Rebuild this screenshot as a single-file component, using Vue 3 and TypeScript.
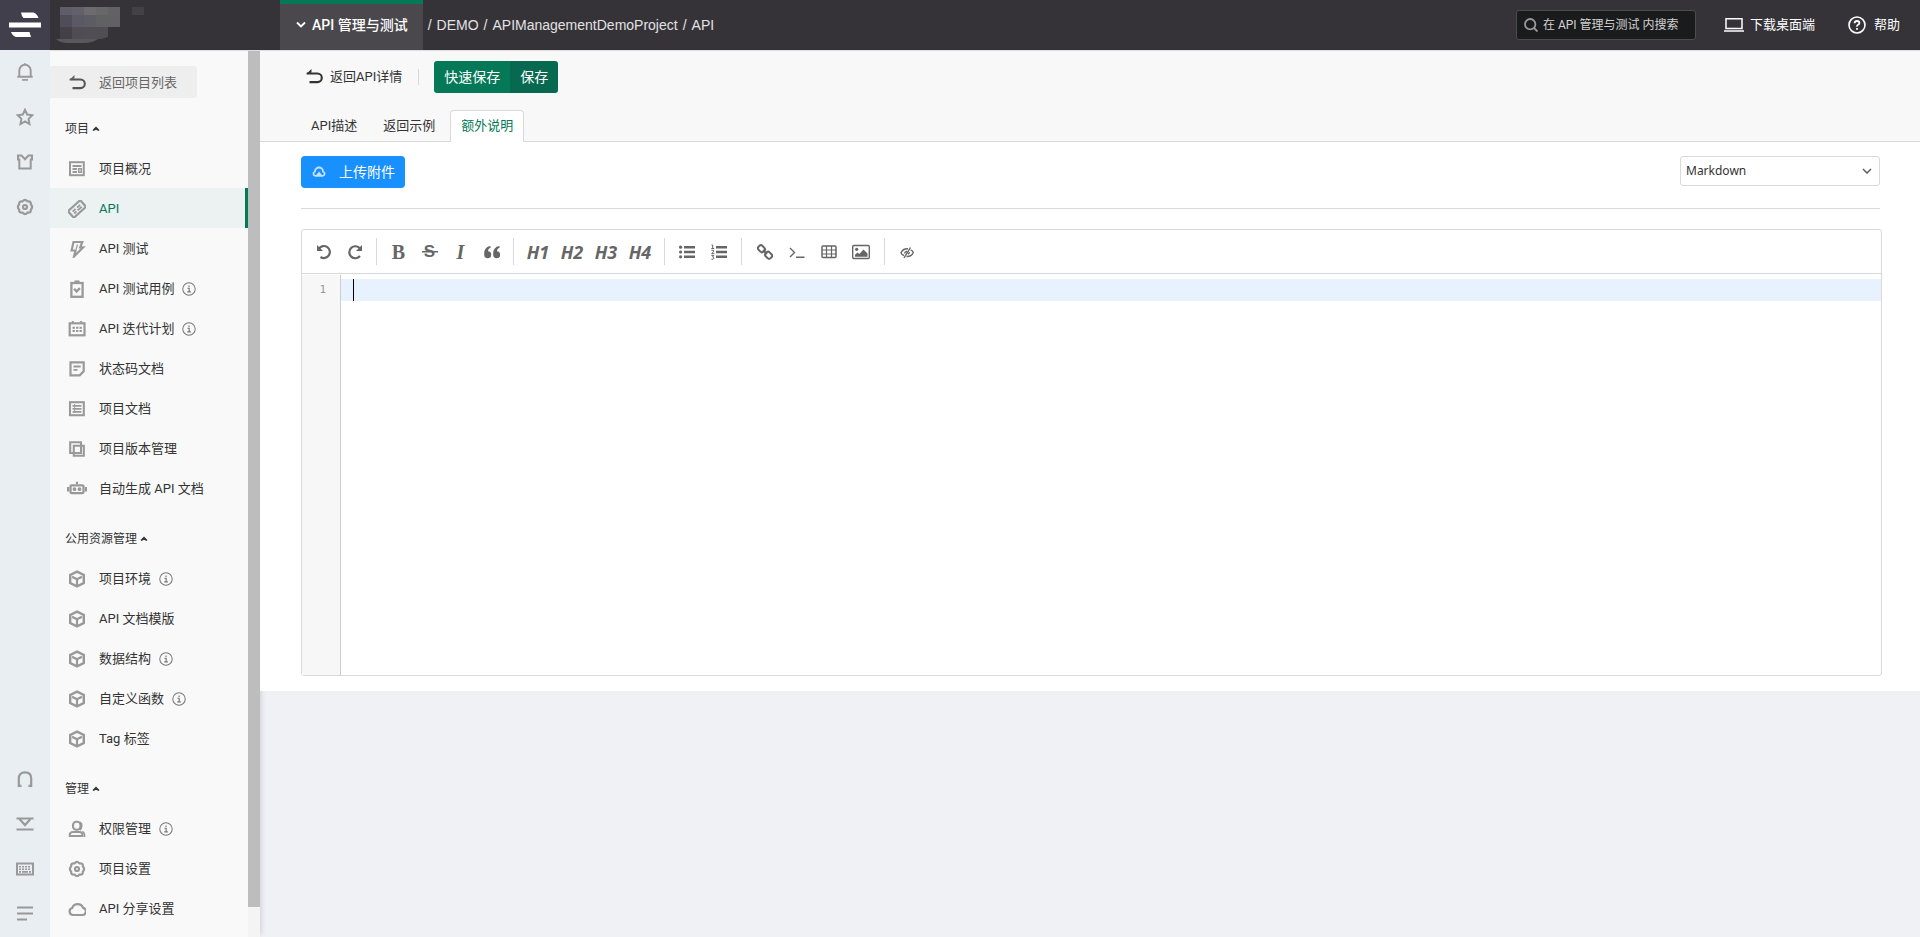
<script setup lang="ts">
import { ref } from 'vue'

interface MenuItem {
  label: string
  icon: string
  info?: boolean
  active?: boolean
}
interface MenuSection {
  title: string
  items: MenuItem[]
}

const cube =
  '<path d="M9 1.600 15.800 5v8L9 16.400 2.200 13V5z" stroke-width="2.400"/><path d="M4 6.700 9 9.300l5-2.600M9 9.300v5.700" stroke-width="2.200"/>'
const gear =
  '<path d="M6.600 3.400Q9 .4 11.400 3.400Q15.200 2.900 14.800 6.200Q17.400 9 14.800 11.800Q15.200 15.100 11.400 14.600Q9 17.600 6.600 14.600Q2.800 15.100 3.200 11.800Q.6 9 3.200 6.200Q2.800 2.900 6.600 3.400z" stroke-width="2.200"/><circle cx="9" cy="9" r="2" stroke-width="2.200"/>'

const icons: Record<string, string> = {
  cube,
  gear,
  bell: '<path d="M3.300 13.500V7.500a5.700 5.700 0 0 1 11.400 0v6M1.300 13.800h15.400M9 2V.3" stroke-width="1.900"/><path d="M6 16.900h6" stroke-width="1.700"/>',
  star: '<path d="m9 1.800 2.200 4.700 5.200.7-3.800 3.600.9 5.200L9 13.500 4.500 16l.9-5.200L1.600 7.200l5.200-.7z" stroke-width="2"/>',
  shirt: '<path d="M2 2.500h3.500L9 6.200l3.500-3.700H16v4h-1.300v9H3.300v-9H2z" stroke-width="2"/>',
  headset: '<path d="M5.500 15.800H2.800V8.500C2.800 4.800 5 2.400 9 2.400s6.200 2.400 6.200 6.100v7.300h-2.800" stroke-width="2.200"/>',
  download: '<path d="M.5 3.500h17M.5 14.500h17" stroke-width="2"/><path d="M3.500 4 9 10l5.500-6" stroke-width="2.200"/>',
  keyboard: '<rect x="1" y="3.500" width="16" height="11" stroke-width="2"/><path d="M3 6.800h12M3 9.200h12" stroke-width="1.600" stroke-dasharray="2 1"/><path d="M3 11.800h2M6 11.800h6M13 11.800h2" stroke-width="1.700"/>',
  lines: '<path d="M1 2.500h16M1 8.500h16M1 14.500h10" stroke-width="2"/>',
  overview: '<rect x="2" y="2.200" width="13.800" height="13" stroke-width="2"/><path d="M4.500 6h9M4.500 9h4.500M4.500 12h4.500" stroke-width="1.800"/><path d="M10.700 8.700h2.600v3.500h-2.600z" stroke-width="1.500"/>',
  api: '<g transform="rotate(-42 9 9)"><rect x=".8" y="4.600" width="16.400" height="8.800" stroke-width="2.200"/><path d="M4 8h4M10 8h4M4 10.500h3M8.500 10.500h5.500" stroke-width="1.800"/></g>',
  bolt: '<path d="M5.500 2h8.800L12.200 7.300h3L6 16.500l1.500-6H3.600z" stroke-width="2.200"/><path d="M9.500 4.500 8 9.500" stroke-width="1.200"/>',
  clipboard: '<rect x="3.400" y="3" width="11.200" height="13.800" stroke-width="2.300"/><path d="M6.500 1.600h5" stroke-width="2.400"/><path d="m6.200 8.800 2.300 2.700 3.400-3.400" stroke-width="2.400"/>',
  calendar: '<rect x="1.700" y="3.300" width="14.800" height="12" stroke-width="2.200"/><path d="M4.800 1v3M13.200 1v3"/><path d="M4.500 7.800h9.500M4.500 11h9.500" stroke-width="2" stroke-dasharray="2.400 1.100"/>',
  note: '<path d="M2.500 2.300h13.200v9l-4 4H2.500z" stroke-width="2.200"/><path d="M5.500 6.500h7.200M5.500 9.800h4" stroke-width="1.800"/>',
  document: '<rect x="2" y="2.200" width="13.800" height="13" stroke-width="2.100"/><path d="M4.500 5.800h9M4.500 8.800h9M4.500 11.800h9" stroke-width="1.700"/><path d="M6.700 4v9" stroke-width="1"/>',
  copies: '<path d="M2.200 2.200h10.800v10.800H2.200zM5.800 5.800h10v10h-10z" stroke-width="2.100"/>',
  robot: '<rect x="3.500" y="5.300" width="13" height="7.800" rx="1" stroke-width="2.300"/><path d="M10 1.700v2.300M1 7v4.500M19 7v4.500" stroke-width="2.200"/><circle cx="7.500" cy="9.200" r=".9"/><circle cx="12.500" cy="9.200" r=".9"/>',
  user: '<rect x="5" y="1.800" width="7.500" height="8" rx="3.400" stroke-width="2.100"/><path d="M1.800 16v-1.800Q2.300 12 5 12h6.500q2.700.2 3 2.500V16z" stroke-width="2.100"/><path d="M12 2.200q2.300 1.300 1.700 4.300T12 10.200M14.300 11.500q2.400.9 2.400 5.400" stroke-width="1.500"/>',
  cloud: '<path d="M4.600 15h9.600a3.600 3.600 0 0 0 .9-7.100A5.800 5.800 0 0 0 4.200 8 3.600 3.600 0 0 0 4.600 15z" stroke-width="2.200"/>',
  info: '<circle cx="9" cy="9" r="8" stroke-width="1.300"/><path d="M7 8h2.200v4.600M6.800 12.800h4.600M9 4.600v1.800" stroke-width="1.500"/>',
  back: '<path d="M1.800 5.500h10.700a4.300 4.300 0 0 1 0 8.600H4.500" stroke-width="2.100"/><path d="M1 6.200 6.500 1v3.500z" fill="currentColor" stroke="none"/>'
}

const sections: MenuSection[] = [
  {
    title: '项目',
    items: [
      { label: '项目概况', icon: 'overview' },
      { label: 'API', icon: 'api', active: true },
      { label: 'API 测试', icon: 'bolt' },
      { label: 'API 测试用例', icon: 'clipboard', info: true },
      { label: 'API 迭代计划', icon: 'calendar', info: true },
      { label: '状态码文档', icon: 'note' },
      { label: '项目文档', icon: 'document' },
      { label: '项目版本管理', icon: 'copies' },
      { label: '自动生成 API 文档', icon: 'robot' }
    ]
  },
  {
    title: '公用资源管理',
    items: [
      { label: '项目环境', icon: 'cube', info: true },
      { label: 'API 文档模版', icon: 'cube' },
      { label: '数据结构', icon: 'cube', info: true },
      { label: '自定义函数', icon: 'cube', info: true },
      { label: 'Tag 标签', icon: 'cube' }
    ]
  },
  {
    title: '管理',
    items: [
      { label: '权限管理', icon: 'user', info: true },
      { label: '项目设置', icon: 'gear' },
      { label: 'API 分享设置', icon: 'cloud' }
    ]
  }
]

const railTop = [
  { icon: 'bell', label: '通知' },
  { icon: 'star', label: '收藏' },
  { icon: 'shirt', label: '主题' },
  { icon: 'gear', label: '设置' }
]
const railBottom = [
  { icon: 'headset', label: '客服' },
  { icon: 'download', label: '下载' },
  { icon: 'keyboard', label: '快捷键' },
  { icon: 'lines', label: '菜单' }
]

const tabs = ['API描述', '返回示例', '额外说明']
const currentTab = ref('额外说明')
const format = ref('Markdown')
const keyword = ref('')
const content = ref('')
const headings = ['H1', 'H2', 'H3', 'H4']
</script>

<template>
  <div class="page">
    <header class="topbar">
      <a class="logo" href="#" aria-label="首页">
        <svg width="34" height="26" viewBox="0 0 34 26" fill="#fff">
          <path d="M13 .5h12.500q3.500 1 5 5.500H15.500Q13.500 4 13 .5zM1 10.500h32v5H1zM3 20h18.500l1.500 5H8Q4.500 24 3 20z" />
        </svg>
      </a>
      <svg class="workspace" width="90" height="38" viewBox="0 0 90 38" aria-hidden="true">
        <path d="M2 33h42q-6 4-14 4H14Q6 37 2 33z" fill="#59595d" />
        <path d="M6 1h12v8H6z" fill="#5f5d69" /><path d="M18 1h12v8H18z" fill="#626069" />
        <path d="M30 1h12v8H30z" fill="#6d6b70" /><path d="M42 1h12v8H42z" fill="#67676a" />
        <path d="M54 1h12v8H54z" fill="#626166" /><path d="M6 9h12v12H6z" fill="#4f4d57" />
        <path d="M18 9h12v12H18z" fill="#5b5965" /><path d="M30 9h12v12H30z" fill="#5c5d62" />
        <path d="M42 9h24v12H42z" fill="#616164" /><path d="M6 21h12v12H6z" fill="#434148" />
        <path d="M18 21h12v12H18z" fill="#4f4d53" /><path d="M30 21h24v10l-7 2H30z" fill="#504e53" />
        <path d="M78 1h12v8H78z" fill="#434146" />
      </svg>
      <button class="product" type="button">
        <svg width="10" height="8" viewBox="0 0 10 8" fill="none" stroke="#fff" stroke-width="1.800"><path d="m1 1.500 4 4 4-4" /></svg>
        API 管理与测试
      </button>
      <nav class="crumbs" aria-label="路径">
        <span>/</span><a href="#">DEMO</a><span>/</span><a href="#">APIManagementDemoProject</a><span>/</span><a href="#">API</a>
      </nav>
      <label class="search">
        <svg width="14" height="14" viewBox="0 0 14 14" fill="none" stroke="#9a9a9c" stroke-width="1.800"><circle cx="6.200" cy="6.200" r="5.200" /><path d="m10 10 3.500 3.500" /></svg>
        <input v-model="keyword" type="text" aria-label="搜索" placeholder="在 API 管理与测试 内搜索" />
      </label>
      <button class="top-action" type="button">
        <svg width="20" height="14" viewBox="0 0 20 14" fill="none" stroke="#fff"><path d="M2 .8h16v9.700H2z" stroke-width="1.500" /><path d="M0 13h20" stroke-width="1.500" /></svg>
        下载桌面端
      </button>
      <button class="top-action help" type="button">
        <svg width="18" height="18" viewBox="0 0 18 18" fill="none" stroke="#fff"><circle cx="9" cy="9" r="8" stroke-width="1.600" /><path d="M6.600 7.200Q6.600 5 9 5t2.400 2q0 1.200-1.300 1.800T9 10.600M9 12v1.800" stroke-width="1.800" /></svg>
        帮助
      </button>
    </header>

    <div class="body">
      <aside class="rail">
        <div>
          <button v-for="r in railTop" :key="r.icon" type="button" :aria-label="r.label">
            <svg class="ico" viewBox="0 0 18 18" v-html="icons[r.icon]" />
          </button>
        </div>
        <div>
          <button v-for="r in railBottom" :key="r.icon" type="button" :aria-label="r.label">
            <svg class="ico" viewBox="0 0 18 18" v-html="icons[r.icon]" />
          </button>
        </div>
      </aside>

      <aside class="sidebar">
        <nav class="menu" aria-label="项目菜单">
          <a class="back-list" href="#">
            <svg class="ico" viewBox="0 0 18 18" v-html="icons.back" />
            返回项目列表
          </a>
          <section v-for="s in sections" :key="s.title">
            <button class="section-title" type="button">
              {{ s.title }}
              <svg width="8" height="6" viewBox="0 0 8 6"><path d="M4 .5 7.500 4 6.500 5 4 3.800 1.500 5 .5 4z" fill="#333" /></svg>
            </button>
            <a v-for="m in s.items" :key="m.label" href="#" class="item" :class="{ active: m.active }">
              <svg class="ico" :class="{ wide: m.icon === 'robot' }" :viewBox="m.icon === 'robot' ? '0 0 20 18' : '0 0 18 18'" v-html="icons[m.icon]" />
              {{ m.label }}
              <svg v-if="m.info" class="info" viewBox="0 0 18 18" v-html="icons.info" />
            </a>
          </section>
        </nav>
        <div class="track"><div class="thumb"></div></div>
      </aside>

      <main class="main">
        <div class="head">
          <div class="actions">
            <a class="back" href="#">
              <svg class="ico" viewBox="0 0 18 18" v-html="icons.back" />
              返回API详情
            </a>
            <div class="save">
              <button type="button">快速保存</button>
              <button type="button" class="dark">保存</button>
            </div>
          </div>
          <div class="tabs" role="tablist">
            <button
              v-for="t in tabs"
              :key="t"
              type="button"
              role="tab"
              :aria-selected="t === currentTab"
              :class="{ on: t === currentTab }"
              @click="currentTab = t"
            >{{ t }}</button>
          </div>
        </div>

        <div class="content">
          <div class="options">
            <button class="upload" type="button">
              <svg width="14" height="12" viewBox="0 0 14 12" fill="none" stroke="#c4e1ff" stroke-width="1.800"><path d="M3.300 9.800A2.200 2.200 0 0 1 3 5.500a4 4 0 0 1 8 0 2.200 2.200 0 0 1-.3 4.300z" /><path d="M7 5.500 9.800 9H4.200z" fill="#c4e1ff" stroke="none" /></svg>
              上传附件
            </button>
            <div class="select">
              <select v-model="format" aria-label="格式">
                <option>Markdown</option>
                <option>富文本</option>
              </select>
              <svg width="10" height="7" viewBox="0 0 10 7" fill="none" stroke="#555" stroke-width="1.400"><path d="m1 1 4 4 4-4" /></svg>
            </div>
          </div>

          <div class="editor">
            <div class="tools" role="toolbar">
              <button type="button" aria-label="撤销"><svg width="16" height="16" viewBox="0 0 16 16" fill="none" stroke="#666" stroke-width="2.200"><path d="M3 4.500A6 6 0 1 1 4.500 13" /><path d="M1 1v6h6z" fill="#666" stroke="none" /></svg></button>
              <button type="button" aria-label="重做"><svg width="16" height="16" viewBox="0 0 16 16" fill="none" stroke="#666" stroke-width="2.200"><path d="M13 4.500A6 6 0 1 0 13 12" /><path d="M15 1v6H9z" fill="#666" stroke="none" /></svg></button>
              <i class="sep"></i>
              <button type="button" class="serif bold" aria-label="粗体">B</button>
              <button type="button" class="strike" aria-label="删除线">S<svg width="16" height="2" viewBox="0 0 16 2"><path d="M0 0h16v1.500H0z" fill="#666" /></svg></button>
              <button type="button" class="serif italic" aria-label="斜体">I</button>
              <button type="button" aria-label="引用"><svg width="16" height="16" viewBox="0 0 16 16" fill="#666"><path d="M6.500 2v2Q4.200 4.300 4 7.300a3.500 3.500 0 1 1-3.800 3.500Q-.3 3 6.500 2zM15.500 2v2q-2.300.3-2.500 3.300a3.500 3.500 0 1 1-3.800 3.500Q8.700 3 15.500 2z" /></svg></button>
              <i class="sep"></i>
              <div class="group">
                <button v-for="h in headings" :key="h" type="button" class="h">{{ h }}</button>
              </div>
              <i class="sep"></i>
              <button type="button" class="w" aria-label="无序列表"><svg width="16" height="14" viewBox="0 0 16 14" fill="#666"><path d="M5 1h11v2.400H5zM5 5.800h11v2.400H5zM5 10.600h11V13H5z" /><circle cx="1.600" cy="2.200" r="1.600" /><circle cx="1.600" cy="7" r="1.600" /><circle cx="1.600" cy="11.800" r="1.600" /></svg></button>
              <button type="button" class="w" aria-label="有序列表"><svg width="16" height="16" viewBox="0 0 16 16" fill="#666"><path d="M5 2h11v2.400H5zM5 6.800h11v2.400H5zM5 11.600h11V14H5z" /><path d="M.5 1h1.200v3.500M.3 4.500h2.900M.4 6.300h2.200v1.500L.6 9.600h2.700M.4 11.400h2.400L1.600 13q1.500 0 1.200 1.300T.4 15.300" fill="none" stroke="#666" /></svg></button>
              <i class="sep"></i>
              <div class="group">
                <button type="button" class="w" aria-label="链接"><svg width="16" height="16" viewBox="0 0 16 16" fill="none" stroke="#666" stroke-width="2"><rect x="-3.500" y="-2.500" width="7" height="5.500" rx="2.200" transform="translate(4.600 4.600) rotate(45)" /><rect x="-3.500" y="-3" width="7" height="5.500" rx="2.200" transform="translate(11.400 11.400) rotate(45)" /><path d="m6 6 4 4" /></svg></button>
                <button type="button" class="w" aria-label="代码"><svg width="16" height="16" viewBox="0 0 16 16" fill="none" stroke="#666" stroke-width="1.400"><path d="m1 4 4.500 4.500L1 13M7 13.300h8.500" /></svg></button>
                <button type="button" class="w" aria-label="表格"><svg width="16" height="14" viewBox="0 0 16 14" fill="none" stroke="#666"><rect x="1" y="1" width="14" height="11.500" rx="1" stroke-width="1.500" /><path d="M1 5h14M1 9h14M5.500 1v11.500M10.500 1v11.500" stroke-width="1.200" /></svg></button>
                <button type="button" class="w" aria-label="图片"><svg width="18" height="16" viewBox="0 0 18 16"><rect x=".7" y="1.500" width="16.600" height="13" rx="1.200" fill="none" stroke="#666" stroke-width="1.400" /><circle cx="4.700" cy="5.300" r="1.600" fill="#666" /><path d="M3 12.800v-2L5.500 8.500 7.300 10l4.200-4.500 4 4v3.300z" fill="#666" /></svg></button>
              </div>
              <i class="sep"></i>
              <button type="button" class="w" aria-label="预览"><svg width="14" height="14" viewBox="0 0 14 14" fill="none" stroke="#666" stroke-width="1.400"><path d="M8 3.800Q3 3.500 1 7.800q.7 2 3 2.700M6.500 11.500q5 .3 6.800-4-.6-2-2.600-2.700M10.500 2.500 4 13M7 6.200Q5 6.500 4.500 8.500M9.500 7.200q-.3 1.500-1.500 2" /></svg></button>
            </div>
            <div class="code">
              <div class="gutter">1</div>
              <div class="area">
                <textarea v-model="content" aria-label="额外说明" spellcheck="false"></textarea>
                <span class="caret"></span>
              </div>
            </div>
          </div>
        </div>
      </main>
    </div>
  </div>
</template>

<style>
body {
  margin: 0;
}
</style>

<style scoped>
.page,
.page * {
  box-sizing: border-box;
}
.page {
  min-height: 100vh;
  display: flex;
  flex-direction: column;
  background: #f0f1f5;
  color: #333;
  font: 13px/20px Roboto, 'Noto Sans CJK SC', sans-serif;
}
button,
input,
select,
textarea {
  font: inherit;
  color: inherit;
  border: 0;
  padding: 0;
  margin: 0;
  background: none;
  outline: none;
}
button {
  cursor: pointer;
}
a {
  color: inherit;
  text-decoration: none;
}
svg {
  flex: none;
  display: block;
}
.ico {
  width: 18px;
  height: 18px;
  fill: none;
  stroke: #999;
  stroke-width: 2;
}
.ico.wide {
  width: 20px;
  margin: 0 -1px;
}

/* top bar */
.topbar {
  height: 50px;
  display: flex;
  align-items: center;
  background: #353338;
  color: #fff;
}
.logo {
  width: 50px;
  height: 50px;
  display: flex;
  align-items: center;
  justify-content: center;
  background: #403f4b;
}
.workspace {
  margin-left: 4px;
}
.product {
  height: 50px;
  margin-left: 136px;
  padding: 0 15px 4px 16px;
  display: flex;
  align-items: center;
  gap: 6px;
  border-top: 4px solid #047857;
  background: #4a484c;
  color: #fff;
  font-size: 14px;
  font-weight: 500;
}
.crumbs {
  padding-left: 5px;
  display: flex;
  gap: 5px;
  color: #e2e2e3;
  font: 14px/20px 'Liberation Sans', Arial, sans-serif;
}
.search {
  width: 180px;
  height: 30px;
  margin-left: auto;
  padding: 0 8px 0 7px;
  display: flex;
  align-items: center;
  gap: 5px;
  border: 1px solid #4c4b4f;
  border-radius: 3px;
  background: #1a1b1c;
  font-size: 12px;
}
.search input {
  flex: 1;
  min-width: 0;
}
.search input::placeholder {
  color: #d2d2d3;
  opacity: 1;
}
.top-action {
  margin-left: 28px;
  display: flex;
  align-items: center;
  gap: 6px;
}
.help {
  margin: 0 20px 0 33px;
  gap: 8px;
}

.body {
  flex: 1;
  display: flex;
}

/* icon rail */
.rail {
  width: 50px;
  flex: none;
  display: flex;
  flex-direction: column;
  justify-content: space-between;
  background: #e9eef3;
}
.rail button {
  width: 50px;
  height: 45px;
  padding-bottom: 2px;
  display: flex;
  align-items: center;
  justify-content: center;
}

/* project menu */
.sidebar {
  width: 210px;
  flex: none;
  display: flex;
  background: #f9f9f9;
  border-top: 1px solid #dedede;
  box-shadow: 4px 0 5px -3px rgba(60, 60, 90, 0.2);
}
.menu {
  flex: 1;
  padding: 15px 0 9px;
}
.back-list {
  width: 147px;
  height: 32px;
  padding: 2px 0 0 18px;
  display: flex;
  align-items: center;
  gap: 13px;
  border-radius: 0 3px 3px 0;
  background: #eee;
  color: #666;
}
.back-list .ico {
  stroke: #555;
}
.section-title {
  height: 50px;
  padding: 11px 0 0 15px;
  display: flex;
  align-items: center;
  gap: 3px;
  font-size: 12px;
}
.item {
  height: 40px;
  padding: 2px 0 0 18px;
  display: flex;
  align-items: center;
  gap: 13px;
}
.item.active {
  background: #ebf2f1;
  border-right: 3px solid #047857;
  color: #047857;
}
.info {
  width: 14px;
  height: 14px;
  margin-left: -5px;
  fill: none;
  stroke: #777;
}
.track {
  width: 12px;
  background: #f4f4f4;
}
.thumb {
  height: 96.6%;
  background: #bdbdbd;
}

/* main column */
.main {
  flex: 1;
  min-width: 0;
}
.head {
  padding: 10px 40px 0;
  border-top: 1px solid #dedede;
  border-bottom: 1px solid #d9d9d9;
  background: #f8f8f8;
}
.actions {
  display: flex;
  align-items: center;
  height: 32px;
}
.back {
  height: 16px;
  padding: 0 16px 0 5px;
  margin-right: 15px;
  display: flex;
  align-items: center;
  gap: 7px;
  border-right: 1px solid #d9d9d9;
}
.back .ico {
  stroke: #333;
}
.save {
  display: flex;
  border-radius: 3px;
  overflow: hidden;
  color: #fff;
  font-size: 14px;
}
.save button {
  height: 32px;
  padding: 0 10px;
  background: #047857;
}
.save .dark {
  background: #076a50;
}
.tabs {
  display: flex;
  gap: 4px;
  margin: 17px 0 -1px;
}
.tabs button {
  height: 32px;
  padding: 0 10px 2px;
  border: 1px solid transparent;
  border-bottom: 0;
  border-radius: 4px 4px 0 0;
}
.tabs .on {
  border-color: #d9d9d9;
  background: #fff;
  color: #047857;
}
.content {
  padding: 14px 40px 15px 41px;
  background: #fff;
}
.options {
  display: flex;
  justify-content: space-between;
  align-items: flex-start;
  padding-bottom: 20px;
  border-bottom: 1px solid #d9d9d9;
}
.upload {
  height: 32px;
  padding: 0 10px 0 11px;
  display: flex;
  align-items: center;
  gap: 13px;
  border-radius: 4px;
  background: #1890ff;
  color: #fff;
  font-size: 14px;
}
.select {
  width: 200px;
  height: 30px;
  padding: 0 7px 0 5px;
  display: flex;
  align-items: center;
  border: 1px solid #d9d9d9;
  border-radius: 3px;
  font-size: 12px;
  font-family: 'Noto Sans', sans-serif;
}
.select select {
  flex: 1;
  appearance: none;
}
.editor {
  margin: 20px -2px 0 0;
  border: 1px solid #d9d9d9;
  border-radius: 3px;
}
.tools {
  height: 44px;
  padding: 0 6px;
  display: flex;
  align-items: center;
  border-bottom: 1px solid #d9d9d9;
  color: #666;
}
.tools button {
  width: 31px;
  height: 26px;
  display: flex;
  align-items: center;
  justify-content: center;
}
.tools .w {
  width: 32px;
}
.sep {
  width: 1px;
  height: 27px;
  margin: 0 6px;
  background: #d9d9d9;
}
.group {
  display: flex;
  padding: 0 1px;
}
.tools .h {
  width: 34px;
  font: italic 700 18px/20px 'Open Sans', 'Noto Sans', sans-serif;
}
.serif {
  font: 700 20px/20px 'Liberation Serif', serif;
}
.serif.italic {
  font-style: italic;
}
.strike {
  position: relative;
  font: 700 17px/20px 'Liberation Sans', sans-serif;
}
.strike svg {
  position: absolute;
}
.code {
  display: flex;
  min-height: 401px;
  padding-top: 1px;
}
.gutter {
  width: 39px;
  padding: 4px 14px 0 0;
  border-right: 1px solid #ccc;
  background: #f7f7f7;
  color: #999;
  font: 11px/22px 'DejaVu Sans Mono', monospace;
  text-align: right;
}
.area {
  flex: 1;
  display: flex;
  position: relative;
  padding-top: 4px;
}
textarea {
  flex: 1;
  padding: 0 12px;
  resize: none;
  line-height: 22px;
  background: linear-gradient(#e8f2fe, #e8f2fe) 0 0 / 100% 22px no-repeat;
}
.caret {
  position: absolute;
  left: 12px;
  top: 4px;
  width: 1px;
  height: 22px;
  background: #000;
}
</style>
